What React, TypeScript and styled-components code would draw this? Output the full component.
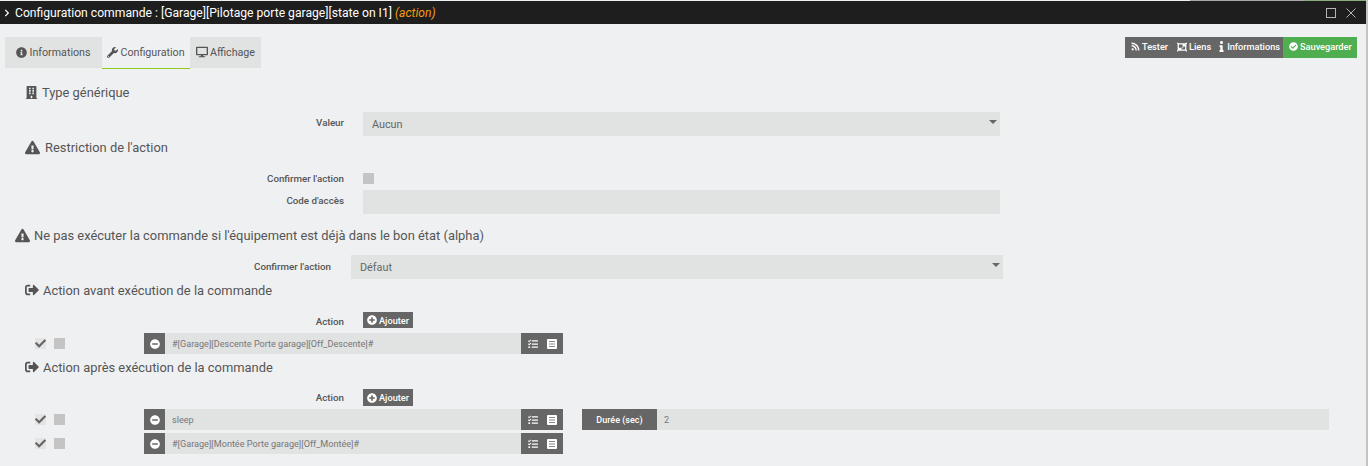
import React from "react";
import styled, { createGlobalStyle } from "styled-components";
import { FaInfoCircle, FaWrench, FaDesktop, FaBuilding, FaExclamationTriangle, FaSignOutAlt, FaPlusCircle, FaMinusCircle, FaCheck, FaTasks, FaRss, FaCheckCircle, FaChevronRight, FaInfo, FaObjectGroup } from "react-icons/fa";

const Global = createGlobalStyle`
  html, body { margin: 0; padding: 0; background: #eff0f2; }
  body { font-family: Roboto, "Liberation Sans", sans-serif; color: #555; overflow: hidden; }
`;

const Page = styled.div`
  width: 1368px;
  height: 466px;
  overflow: hidden;
  background: #eff0f2;
  box-sizing: border-box;
  border-right: 2px solid #c4c4c4;
`;
const TopStrip = styled.div`
  height: 1px;
  display: grid;
  grid-template-columns: 1190px 115px 1fr;
`;
const StripGreen = styled.span`
  background: #8bab7e;
`;
const StripGray = styled.span`
  background: #a8a8a8;
`;
const TitleBar = styled.header`
  height: 23px;
  background: #1e1e1e;
  color: #fff;
  display: flex;
  align-items: center;
  padding: 0 10px 0 3px;
  font-size: 12.15px;
  gap: 4px;
`;
const Title = styled.span`
  flex: 1;
  white-space: nowrap;
`;
const Em = styled.em`
  color: #f39c12;
`;
const WinIcon = styled.svg`
  display: block;
  margin-left: 6px;
  flex: none;
`;
const TopBar = styled.div`
  display: flex;
  justify-content: space-between;
  align-items: flex-start;
  padding: 13px 9px 0 5px;
  height: 31px;
`;
const Tabs = styled.div`
  display: flex;
  align-items: flex-start;
`;
const Tab = styled.div<{ $active?: boolean; $w: number }>`
  width: ${(p) => p.$w}px;
  height: ${(p) => (p.$active ? 32 : 31)}px;
  box-sizing: border-box;
  display: flex;
  align-items: center;
  justify-content: center;
  gap: 2px;
  font-size: 10.7px;
  padding-bottom: 1px;
  color: #555;
  background: ${(p) => (p.$active ? "transparent" : "#e1e2e2")};
  border-bottom: ${(p) => (p.$active ? "1px solid #8fcb1e" : "none")};
`;
const Actions = styled.div`
  display: flex;
  height: 21px;
`;
const ActionBtn = styled.div<{ $green?: boolean; $w: number }>`
  width: ${(p) => p.$w}px;
  background: ${(p) => (p.$green ? "#4fae50" : "#666")};
  color: #fff;
  font-size: 9.2px;
  font-weight: 500;
  display: flex;
  align-items: center;
  padding: 0 0 2px 6px;
  box-sizing: border-box;
`;
const BtnItem = styled.span<{ $gap?: number; $ml?: number }>`
  display: inline-flex;
  align-items: center;
  gap: ${(p) => p.$gap ?? 2}px;
  margin-left: ${(p) => p.$ml ?? 0}px;
`;
const Heading = styled.div<{ $left: number; $top: number; $gap?: number }>`
  display: flex;
  align-items: center;
  gap: ${(p) => p.$gap ?? 5}px;
  height: 16px;
  font-size: 12.9px;
  color: #555;
  padding-left: ${(p) => p.$left}px;
  margin-top: ${(p) => p.$top}px;
`;
const FormRow = styled.div<{ $top: number; $h: number; $label?: number }>`
  display: grid;
  grid-template-columns: ${(p) => p.$label ?? 344}px 1fr;
  column-gap: ${(p) => ((p.$label ?? 344) === 344 ? 19 : 20)}px;
  align-items: center;
  height: ${(p) => p.$h}px;
  margin-top: ${(p) => p.$top}px;
`;
const Label = styled.label<{ $up?: number; $down?: number }>`
  text-align: right;
  font-size: 9.75px;
  font-weight: 500;
  color: #555;
  padding-bottom: ${(p) => p.$up ?? 0}px;
  padding-top: ${(p) => p.$down ?? 0}px;
`;
const Field = styled.div<{ $w: number; $h?: number }>`
  width: ${(p) => p.$w}px;
  height: ${(p) => p.$h ?? 24}px;
  background: #e1e2e2;
  display: flex;
  align-items: center;
  padding-left: 9px;
  box-sizing: border-box;
  font-size: 10.8px;
  color: #666;
  position: relative;
`;
const Caret = styled.span`
  position: absolute;
  right: 3px;
  top: 8px;
  border-left: 4.5px solid transparent;
  border-right: 4.5px solid transparent;
  border-top: 4.5px solid #666;
`;
const Square = styled.span`
  display: block;
  width: 11px;
  height: 11px;
  background: #c4c4c4;
`;
const AddBtn = styled.div`
  width: 50px;
  height: 100%;
  background: #666;
  color: #fff;
  font-size: 9.2px;
  font-weight: 500;
  display: flex;
  align-items: center;
  justify-content: center;
  gap: 2px;
`;
const ActionRow = styled.div<{ $top: number }>`
  display: flex;
  align-items: center;
  height: 21px;
  padding-left: 35px;
  margin-top: ${(p) => p.$top}px;
`;
const Check = styled.span`
  width: 11px;
  height: 11px;
  background: #e4e4e4;
  color: #666;
  display: flex;
  align-items: center;
  justify-content: center;
  font-size: 11px;
  margin-right: 8px;
`;
const Group = styled.div`
  display: flex;
  height: 21px;
  width: 419px;
  margin-left: 79px;
`;
const Addon = styled.div<{ $w: number }>`
  width: ${(p) => p.$w}px;
  background: #666;
  color: #fff;
  display: flex;
  align-items: center;
  justify-content: center;
  gap: 9px;
  font-size: 9px;
  font-weight: 500;
  flex: none;
`;
const Input = styled.div`
  flex: 1;
  background: #e1e2e2;
  display: flex;
  align-items: center;
  padding-left: 7px;
  font-size: 9.1px;
  color: #777;
`;
const DurGroup = styled.div`
  display: flex;
  height: 21px;
  width: 747px;
  margin-left: 19px;
`;

const ListAltIcon = () => (
  <svg width="10" height="10" viewBox="0 0 10 10">
    <rect width="10" height="10" rx="1" fill="#fff" />
    <path d="M2 2.5H8M2 5H8M2 7.5H8" stroke="#8a8a8a" strokeWidth="1" />
  </svg>
);

const ActionLine = ({ text, top, dur }: { text: string; top: number; dur?: boolean }) => (
  <ActionRow $top={top}>
    <Check><FaCheck /></Check>
    <Square />
    <Group>
      <Addon $w={21}><FaMinusCircle size={10} /></Addon>
      <Input>{text}</Input>
      <Addon $w={42}><FaTasks size={10} /><ListAltIcon /></Addon>
    </Group>
    {dur && (
      <DurGroup>
        <Addon $w={75}>Durée (sec)</Addon>
        <Input>2</Input>
      </DurGroup>
    )}
  </ActionRow>
);

export default function App() {
  return (
    <Page>
      <Global />
      <TopStrip>
        <span />
        <StripGray />
        <StripGreen />
      </TopStrip>
      <TitleBar>
        <FaChevronRight size={8} />
        <Title>
          Configuration commande : [Garage][Pilotage porte garage][state on I1] <Em>(action)</Em>
        </Title>
        <WinIcon width="10" height="10" viewBox="0 0 10 10">
          <rect x="0.5" y="0.5" width="9" height="9" fill="none" stroke="#b4b4b4" />
        </WinIcon>
        <WinIcon width="10" height="10" viewBox="0 0 10 10">
          <path d="M0.5 0.5L9.5 9.5M9.5 0.5L0.5 9.5" stroke="#b4b4b4" strokeWidth="1" fill="none" />
        </WinIcon>
      </TitleBar>
      <TopBar>
        <Tabs>
          <Tab $w={97}><FaInfoCircle size={11} />Informations</Tab>
          <Tab $w={88} $active><FaWrench size={11} />Configuration</Tab>
          <Tab $w={71}><FaDesktop size={12} />Affichage</Tab>
        </Tabs>
        <Actions>
          <ActionBtn $w={158}>
            <BtnItem><FaRss size={9} />Tester</BtnItem>
            <BtnItem $ml={9}><FaObjectGroup size={10} />Liens</BtnItem>
            <BtnItem $ml={5} $gap={-1}><FaInfo size={11} />Informations</BtnItem>
          </ActionBtn>
          <ActionBtn $w={74} $green><BtnItem><FaCheckCircle size={9} />Sauvegarder</BtnItem></ActionBtn>
        </Actions>
      </TopBar>
      <Heading $left={25} $top={16} $gap={4}><FaBuilding size={13} />Type générique</Heading>
      <FormRow $top={12} $h={24}>
        <Label $up={3}>Valeur</Label>
        <Field $w={637}>Aucun<Caret /></Field>
      </FormRow>
      <Heading $left={25} $top={3}><FaExclamationTriangle size={15} />Restriction de l'action</Heading>
      <FormRow $top={18} $h={11}>
        <Label>Confirmer l'action</Label>
        <Square />
      </FormRow>
      <FormRow $top={6} $h={24}>
        <Label $up={3}>Code d'accès</Label>
        <Field $w={637} />
      </FormRow>
      <Heading $left={15} $top={13} $gap={4}><FaExclamationTriangle size={15} />Ne pas exécuter la commande si l'équipement est déjà dans le bon état (alpha)</Heading>
      <FormRow $top={12} $h={24} $label={331}>
        <Label $up={1}>Confirmer l'action</Label>
        <Field $w={652}>Défaut<Caret /></Field>
      </FormRow>
      <Heading $left={25} $top={3} $gap={4}><FaSignOutAlt size={14} />Action avant exécution de la commande</Heading>
      <FormRow $top={14} $h={16}>
        <Label $down={2}>Action</Label>
        <AddBtn><FaPlusCircle size={10} />Ajouter</AddBtn>
      </FormRow>
      <ActionLine top={5} text="#[Garage][Descente Porte garage][Off_Descente]#" />
      <Heading $left={25} $top={5} $gap={4}><FaSignOutAlt size={14} />Action après exécution de la commande</Heading>
      <FormRow $top={14} $h={17}>
        <Label>Action</Label>
        <AddBtn><FaPlusCircle size={10} />Ajouter</AddBtn>
      </FormRow>
      <ActionLine top={3} text="sleep" dur />
      <ActionLine top={3} text="#[Garage][Montée Porte garage][Off_Montée]#" />
    </Page>
  );
}
